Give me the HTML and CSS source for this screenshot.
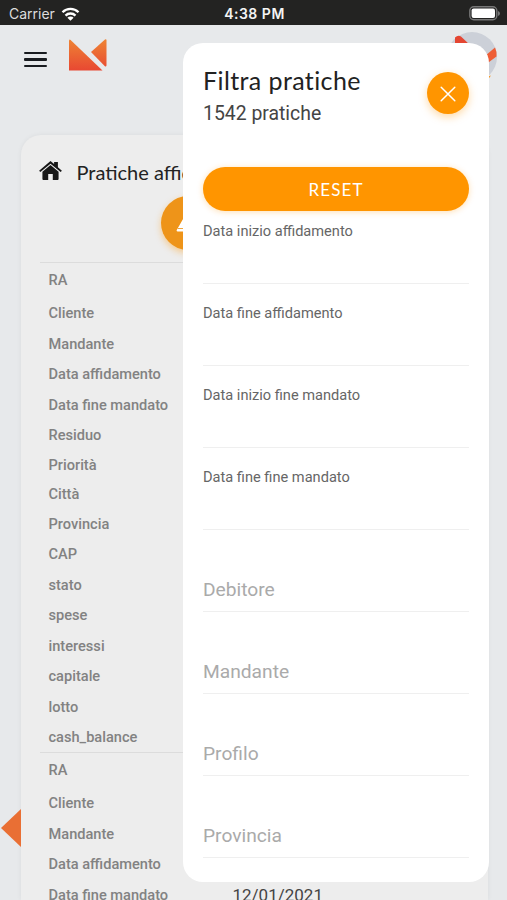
FILE: index.html
```html
<!DOCTYPE html>
<html lang="it">
<head>
    <meta charset="UTF-8">
    <meta name="viewport" content="width=device-width, initial-scale=1.0">
    <title>Pratiche affidate</title>
    <link rel="stylesheet" href="styles.css">
</head>
<body>
    <div class="statusbar">
        <div class="carrier">
            <span>Carrier</span>
            <svg class="wifi" viewBox="0 0 18 14" fill="none" stroke="#fff" stroke-width="2.3">
                <path d="M1 5.2a11.3 11.3 0 0 1 16 0"/>
                <path d="M4 8.6a7 7 0 0 1 10 0"/>
                <path d="M9 13.7L5.9 10.7a4.4 4.4 0 0 1 6.2 0z" fill="#fff" stroke="none"/>
            </svg>
        </div>
        <div class="time">4:38 PM</div>
        <svg class="battery" viewBox="0 0 31 15">
            <rect x="0.8" y="0.8" width="27" height="13" rx="4" fill="#232322" stroke="#777" stroke-width="1.4"/>
            <rect x="2.6" y="2.6" width="23.4" height="9.4" rx="2" fill="#fff"/>
            <path d="M29 5v5q2-.8 2-2.5T29 5z" fill="#777"/>
        </svg>
    </div>

    <header class="header">
        <div class="menu"><i></i><i></i><i></i></div>
        <svg class="logo" viewBox="0 0 38 32">
            <defs>
                <linearGradient id="logoFill" gradientUnits="userSpaceOnUse" x1="0" y1="0" x2="0" y2="32">
                    <stop offset="0" stop-color="#ee8434"/>
                    <stop offset="1" stop-color="#e84732"/>
                </linearGradient>
            </defs>
            <path d="M0 1.2Q.6 0 1.6.9L33.5 31.5H0z" fill="url(#logoFill)"/>
            <path d="M22 13L36 .5q1.3-.9 1.5.6v25.5q-.4 1.6-1.6.7z" fill="url(#logoFill)"/>
        </svg>
        <svg class="avatar" viewBox="0 0 50 50">
            <circle cx="25" cy="25" r="25" fill="#ccd0d8"/>
            <path d="M8 14V5.5q3-3 6-1L24 14z" fill="#e44632"/>
            <path d="M38 24l10-8.5q2 4 1.5 9L38 33z" fill="#ee5e36"/>
            <path d="M38 45.5l6-2-3 4z" fill="#f39322"/>
        </svg>
    </header>

    <main class="card">
        <h1 class="card-title">
            <svg class="home" viewBox="0 0 24 20" fill="#171717">
                <path d="M12 0L15.8 3.2V1h4v5.7L24 10.2l-1.3 1.5L12 2.8 1.3 11.7 0 10.2z"/>
                <path d="M12 4.2l8.5 7.1V19q0 1-1 1H14.4v-6.2H9.6V20H4.5q-1 0-1-1v-7.7z"/>
            </svg>
            <span>Pratiche affidate</span>
        </h1>
        <div class="card-actions">
            <button class="alert">
                <svg viewBox="0 0 28 25" fill="none" stroke="#fff" stroke-width="2.6" stroke-linejoin="round">
                    <path d="M14 2L26 23H2z" fill="#fff"/>
                    <path d="M2 20.7h24" stroke="#ee9419" stroke-width="1"/>
                </svg>
            </button>
        </div>
        <dl class="practice">
            <div class="row first"><dt>RA</dt></div>
            <div class="row"><dt>Cliente</dt></div>
            <div class="row"><dt>Mandante</dt></div>
            <div class="row"><dt>Data affidamento</dt></div>
            <div class="row"><dt>Data fine mandato</dt></div>
            <div class="row"><dt>Residuo</dt></div>
            <div class="row short"><dt>Priorità</dt></div>
            <div class="row short"><dt>Città</dt></div>
            <div class="row"><dt>Provincia</dt></div>
            <div class="row"><dt>CAP</dt></div>
            <div class="row"><dt>stato</dt></div>
            <div class="row"><dt>spese</dt></div>
            <div class="row"><dt>interessi</dt></div>
            <div class="row"><dt>capitale</dt></div>
            <div class="row"><dt>lotto</dt></div>
            <div class="row"><dt>cash_balance</dt></div>
        </dl>
        <dl class="practice">
            <div class="row first"><dt>RA</dt></div>
            <div class="row"><dt>Cliente</dt></div>
            <div class="row"><dt>Mandante</dt></div>
            <div class="row"><dt>Data affidamento</dt></div>
            <div class="row"><dt>Data fine mandato</dt><dd>12/01/2021</dd></div>
        </dl>
    </main>

    <div class="side-arrow"></div>

    <aside class="filter">
        <div class="filter-head">
            <div>
                <h2>Filtra pratiche</h2>
                <p>1542 pratiche</p>
            </div>
            <button class="close">
                <svg viewBox="0 0 16 16" stroke="#fff" stroke-width="1.5" stroke-linecap="round">
                    <path d="M1.2 1.2l13.6 13.6M14.8 1.2L1.2 14.8"/>
                </svg>
            </button>
        </div>
        <button class="reset">RESET</button>
        <div class="field date">Data inizio affidamento</div>
        <div class="field date">Data fine affidamento</div>
        <div class="field date">Data inizio fine mandato</div>
        <div class="field date">Data fine fine mandato</div>
        <div class="field text">Debitore</div>
        <div class="field text">Mandante</div>
        <div class="field text">Profilo</div>
        <div class="field text">Provincia</div>
    </aside>
</body>
</html>
```
FILE: styles.css
```css
* {
    margin: 0;
    padding: 0;
    box-sizing: border-box;
}

body {
    position: relative;
    height: 900px;
    overflow: hidden;
    background: #e7e9eb;
    font-family: Roboto, sans-serif;
    color: #333;
}

button {
    border: none;
    color: #fff;
    background: #ff9500;
    cursor: pointer;
}

/* status bar */
.statusbar {
    height: 25px;
    padding: 2px 7px 0 9px;
    display: grid;
    grid-template-columns: 1fr auto 1fr;
    align-items: center;
    background: #232322;
    color: #f4f4f4;
    font-family: Inter, sans-serif;
    font-size: 14px;
}

.carrier {
    display: flex;
    align-items: center;
    gap: 6px;
    color: #ddd;
}

.wifi {
    width: 19px;
    height: 14px;
}

.time {
    font-weight: 600;
    letter-spacing: 0.5px;
}

.battery {
    width: 31px;
    height: 15px;
    justify-self: end;
}

/* header */
.header {
    height: 110px;
    display: flex;
    align-items: flex-start;
    padding: 7px 10px 0 24px;
}

.menu {
    width: 23px;
    margin: 20px 22px 0 0;
    display: flex;
    flex-direction: column;
    gap: 4px;
}

.menu i {
    height: 2.4px;
    border-radius: 1px;
    background: #191c20;
}

.logo {
    width: 38px;
    height: 32px;
    margin-top: 7px;
}

.avatar {
    width: 50px;
    height: 50px;
    margin-left: auto;
}

/* card */
.card {
    height: 765px;
    margin: 0 19px 0 20.5px;
    padding: 0 19px;
    overflow: hidden;
    background: #ededed;
    border-radius: 20px 20px 0 0;
    box-shadow: 0 0 5px rgba(0, 0, 0, 0.06);
}

.card-title {
    height: 61px;
    padding-top: 12px;
    display: flex;
    align-items: center;
    gap: 15px;
    font-family: Lato, sans-serif;
    font-size: 20px;
    font-weight: 400;
    color: #222;
}

.home {
    width: 23px;
    height: 19px;
    margin: -3px 0 0 -1px;
}

.card-actions {
    height: 66px;
    display: flex;
    justify-content: center;
}

.alert {
    width: 54px;
    height: 54px;
    margin-right: 132px;
    border-radius: 50%;
    background: #ee9419;
    box-shadow: 0 3px 7px rgba(255, 149, 0, 0.4);
}

.alert svg {
    width: 24px;
    height: 23px;
}

.practice {
    border-top: 1px solid #dcdcdc;
}

.row {
    height: 30.5px;
    padding: 0.6px 0 0 9px;
    display: flex;
    align-items: center;
    font-size: 14.6px;
}

.row.first {
    height: 34.5px;
    padding-top: 0;
}

.row.short {
    height: 29px;
    padding-top: 0;
}

.row dt {
    width: 184px;
    font-weight: 500;
    color: #828282;
}

.row dd {
    font-size: 17px;
    color: #444;
}

.side-arrow {
    position: absolute;
    left: 1px;
    top: 809px;
    width: 20px;
    height: 38px;
    background: #e96f34;
    clip-path: polygon(0 50%, 100% 0, 100% 100%);
}

/* filter panel */
.filter {
    position: absolute;
    left: 183px;
    top: 43px;
    width: 306px;
    height: 839px;
    padding: 0 20px;
    background: #fff;
    border-radius: 20px;
}

.filter-head {
    height: 124px;
    padding-top: 21px;
    display: flex;
    justify-content: space-between;
    align-items: flex-start;
}

.filter h2 {
    font-family: Lato, sans-serif;
    font-size: 25px;
    font-weight: 400;
    line-height: 33px;
    letter-spacing: 0.4px;
    color: #222;
}

.filter p {
    font-size: 19.4px;
    line-height: 34px;
    color: #444;
}

.close {
    width: 42px;
    height: 42px;
    margin-top: 8px;
    display: flex;
    align-items: center;
    justify-content: center;
    border-radius: 50%;
    box-shadow: 0 3px 8px rgba(255, 149, 0, 0.35);
}

.close svg {
    width: 16px;
    height: 16px;
    margin-top: 2px;
}

.reset {
    display: block;
    width: 266px;
    height: 44px;
    border-radius: 22px;
    font-family: Lato, sans-serif;
    font-size: 17px;
    letter-spacing: 1.1px;
    box-shadow: 0 1px 6px rgba(255, 149, 0, 0.3);
}

.field {
    height: 82px;
    border-bottom: 1px solid #efefef;
}

.field.date {
    padding-top: 19px;
    line-height: 20px;
    font-size: 14.6px;
    color: #666;
}

.reset + .field.date {
    height: 72.5px;
    padding-top: 9.5px;
}

.field.text {
    padding-top: 48px;
    line-height: 24px;
    font-size: 19.2px;
    color: #aaa;
}
```
